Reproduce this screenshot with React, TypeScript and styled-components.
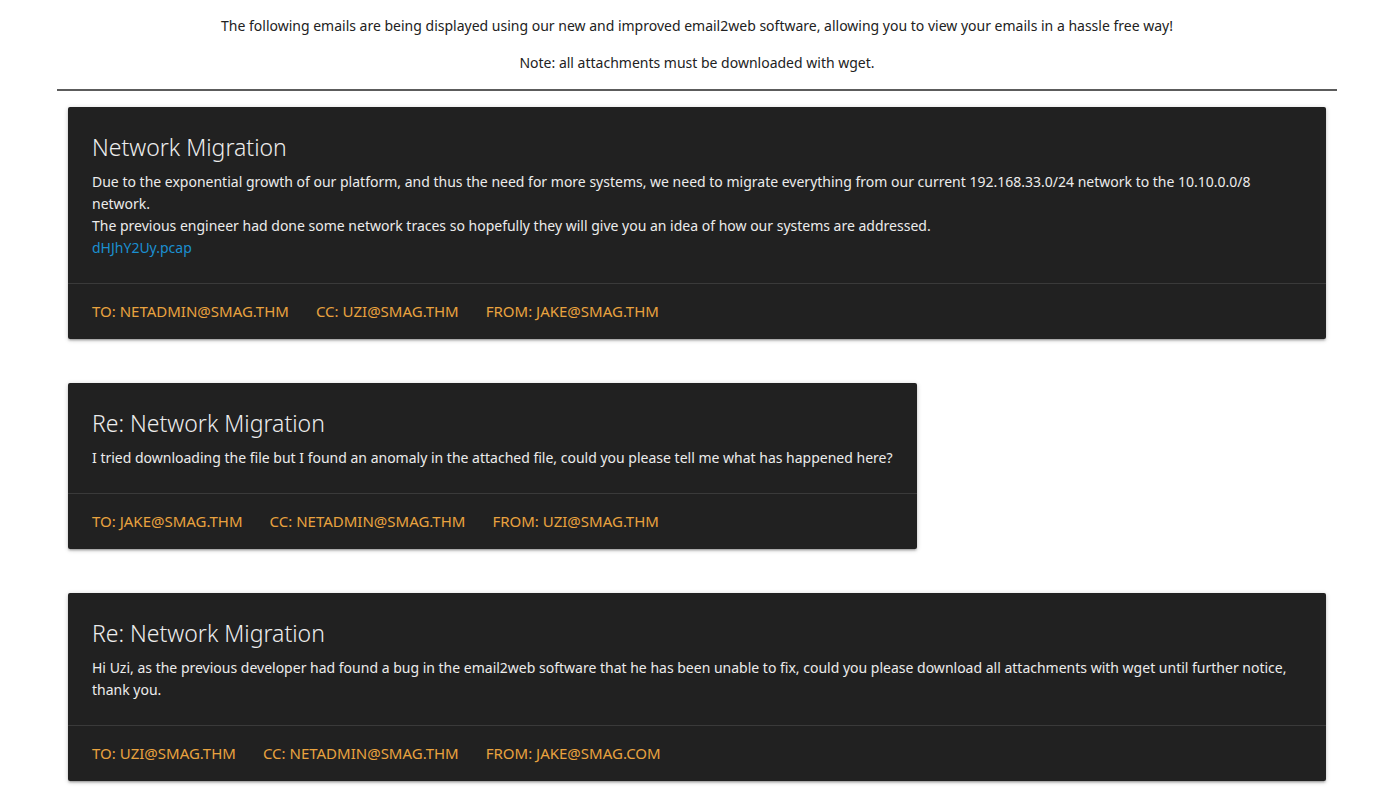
import React, { FC } from 'react'
import styled, { createGlobalStyle } from 'styled-components'

const GlobalStyle = createGlobalStyle`
  html, body {
    margin: 0;
    padding: 0;
    background: #ffffff;
  }
  body {
    font-family: 'Noto Sans', 'Open Sans', sans-serif;
    font-size: 14px;
    line-height: 22px;
    color: rgba(0, 0, 0, 0.87);
  }
`

const Page = styled.main`
  width: 1280px;
  margin-left: 57px;
`

const Intro = styled.header`
  padding-top: 15px;
  text-align: center;
`

const IntroLine = styled.p`
  margin: 0 0 15px;
  font-size: 14px;
  line-height: 22px;
  color: #222222;
`

const Rule = styled.hr`
  margin: 0 0 16px;
  border: 0;
  border-top: 2px solid #5c5c5c;
`

const Row = styled.section`
  padding: 0 11px;
  margin-bottom: 44px;
`

const Card = styled.article<{ $fit?: boolean }>`
  display: ${({ $fit }) => ($fit ? 'inline-block' : 'block')};
  background: #212121;
  border-radius: 2px;
  box-shadow: 0 2px 2px 0 rgba(0, 0, 0, 0.14), 0 3px 1px -2px rgba(0, 0, 0, 0.12),
    0 1px 5px 0 rgba(0, 0, 0, 0.2);
`

const Content = styled.div`
  padding: 24px;
  color: #ececec;
`

const Title = styled.h2`
  margin: 0 0 8px;
  font-size: 23px;
  line-height: 32px;
  font-weight: 300;
  color: #ededed;
`

const Body = styled.p`
  margin: 0;
  font-size: 14px;
  line-height: 22px;
`

const Attachment = styled.a`
  color: #1b8fd0;
  text-decoration: none;
`

const Actions = styled.footer`
  display: flex;
  gap: 27px;
  padding: 16px 24px;
  border-top: 1px solid rgba(160, 160, 160, 0.2);
`

const Address = styled.span`
  font-size: 15px;
  line-height: 23px;
  text-transform: uppercase;
  color: #e9a33f;
`

interface Email {
  subject: string
  body: React.ReactNode
  to: string
  cc: string
  from: string
  fit?: boolean
}

const emails: Email[] = [
  {
    subject: 'Network Migration',
    body: (
      <>
        Due to the exponential growth of our platform, and thus the need for more systems, we
        need to migrate everything from our current 192.168.33.0/24 network to the 10.10.0.0/8
        <br />
        network.
        <br />
        The previous engineer had done some network traces so hopefully they will give you an
        idea of how our systems are addressed.
        <br />
        <Attachment href="#">dHJhY2Uy.pcap</Attachment>
      </>
    ),
    to: 'netadmin@smag.thm',
    cc: 'uzi@smag.thm',
    from: 'jake@smag.thm',
  },
  {
    subject: 'Re: Network Migration',
    body: 'I tried downloading the file but I found an anomaly in the attached file, could you please tell me what has happened here?',
    to: 'jake@smag.thm',
    cc: 'netadmin@smag.thm',
    from: 'uzi@smag.thm',
    fit: true,
  },
  {
    subject: 'Re: Network Migration',
    body: (
      <>
        Hi Uzi, as the previous developer had found a bug in the email2web software that he has
        been unable to fix, could you please download all attachments with wget until further
        notice,
        <br />
        thank you.
      </>
    ),
    to: 'uzi@smag.thm',
    cc: 'netadmin@smag.thm',
    from: 'jake@smag.com',
  },
]

const EmailCard: FC<{ email: Email }> = ({ email }) => (
  <Row>
    <Card $fit={email.fit}>
      <Content>
        <Title>{email.subject}</Title>
        <Body>{email.body}</Body>
      </Content>
      <Actions>
        <Address>To: {email.to}</Address>
        <Address>CC: {email.cc}</Address>
        <Address>From: {email.from}</Address>
      </Actions>
    </Card>
  </Row>
)

const App: FC = () => (
  <>
    <GlobalStyle />
    <Page>
      <Intro>
        <IntroLine>
          The following emails are being displayed using our new and improved email2web
          software, allowing you to view your emails in a hassle free way!
        </IntroLine>
        <IntroLine>Note: all attachments must be downloaded with wget.</IntroLine>
      </Intro>
      <Rule />
      {emails.map((email, i) => (
        <EmailCard key={i} email={email} />
      ))}
    </Page>
  </>
)

export default App
